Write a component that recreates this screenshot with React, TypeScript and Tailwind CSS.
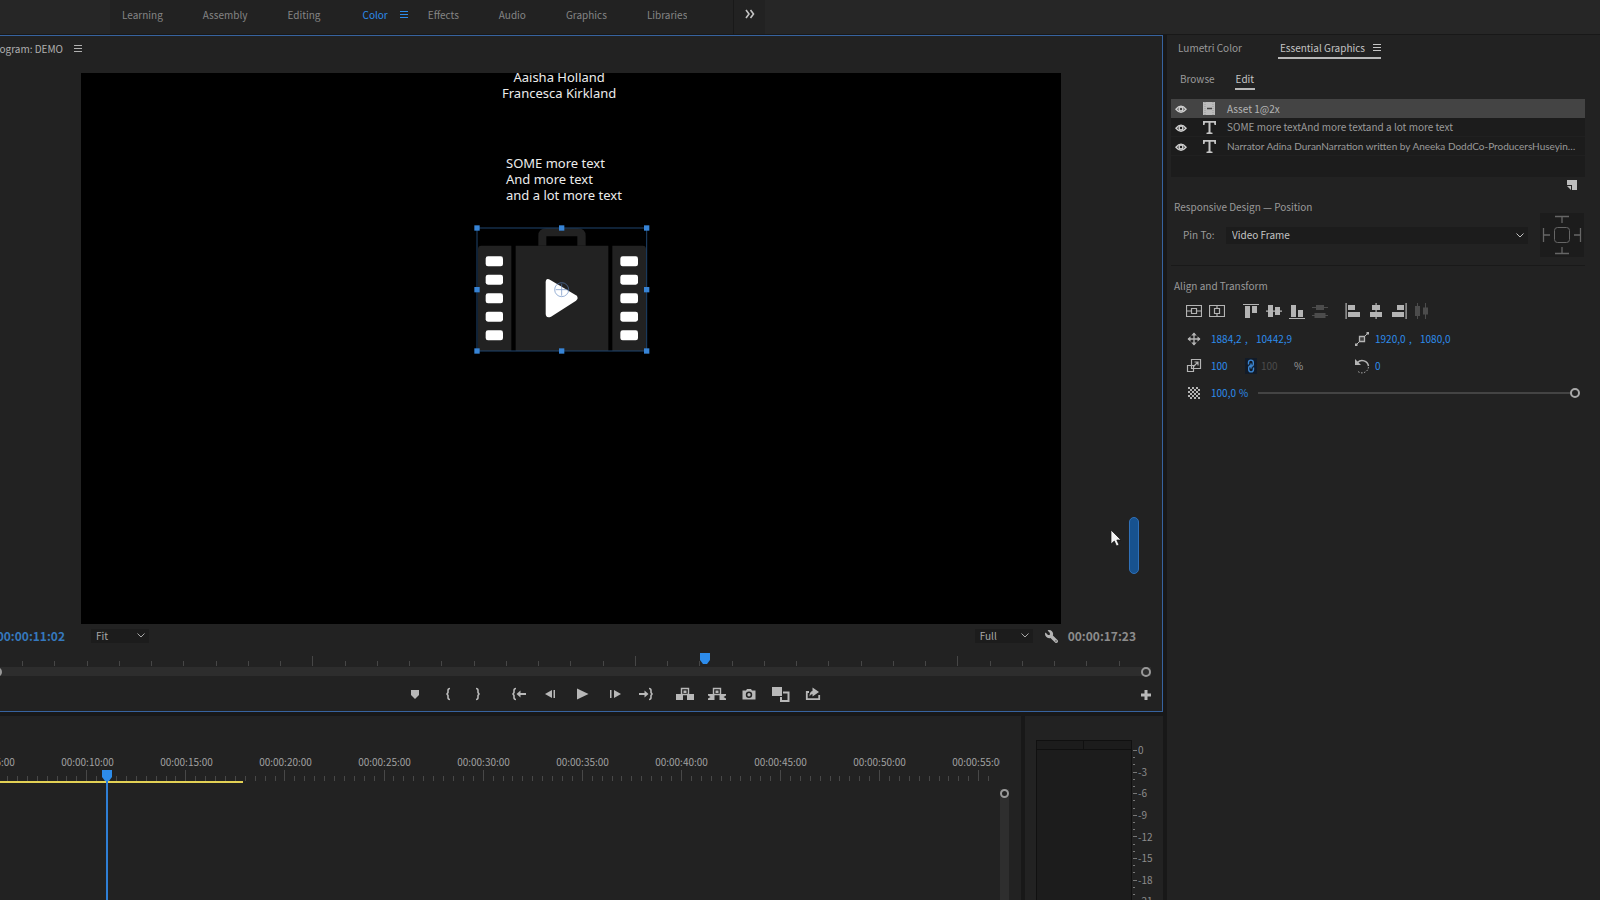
import type { ReactNode } from "react";
import { FaWrench } from "react-icons/fa6";

type Layer = {
  name: string;
  kind: "image" | "text";
  selected?: boolean;
  long?: boolean;
};

const workspacesBefore = ["Learning", "Assembly", "Editing"];
const workspacesAfter = ["Effects", "Audio", "Graphics", "Libraries"];

const layers: Layer[] = [
  { name: "Asset 1@2x", kind: "image", selected: true },
  { name: "SOME more textAnd more textand a lot more text", kind: "text" },
  { name: "Narrator Adina DuranNarration written by Aneeka DoddCo-ProducersHuseyin…", kind: "text", long: true }
];

const timeLabels = ["05", "10", "15", "20", "25", "30", "35", "40", "45", "50", "55"];
const meterLabels = ["0", "-3", "-6", "-9", "-12", "-15", "-18", "-21"];

export default function App() {
  return (
    <div className="flex h-screen flex-col overflow-hidden bg-[#181818] font-['Noto_Sans_CJK_SC','Noto_Sans',sans-serif] text-[10px] leading-4 text-[#9a9a9a]">
      <WorkspaceBar />
      <div className="flex min-h-0 flex-1 gap-1">
        <div className="flex min-w-0 flex-1 flex-col gap-1">
          <ProgramMonitor />
          <div className="flex min-h-0 flex-1 gap-1">
            <Timeline />
            <AudioMeter />
          </div>
        </div>
        <EssentialGraphics />
      </div>
    </div>
  );
}

function WorkspaceBar() {
  return (
    <header className="mb-px flex h-[34px] shrink-0 bg-[#262626]">
      <nav className="ml-[110px] flex items-center bg-[#222222] pb-1 pl-3 text-[#858585]">
        <div className="flex gap-10">
          {workspacesBefore.map((name) => (
            <a key={name} href="#">{name}</a>
          ))}
          <a href="#" className="ml-0.5 text-[#2d8ceb]">Color</a>
        </div>
        <button type="button" aria-label="Workspace menu" className="mr-5 ml-3 text-[#2d8ceb]">
          <Burger />
        </button>
        <div className="flex gap-10">
          {workspacesAfter.map((name) => (
            <a key={name} href="#">{name}</a>
          ))}
        </div>
      </nav>
      <div className="flex w-[78px] justify-end bg-[#222222]">
        <button type="button" aria-label="More workspaces" className="flex w-8 items-center justify-center border-l border-[#191919] pb-1.5 text-[#c4c4c4]">
          <svg width="10" height="10" viewBox="0 0 10 10" fill="none" stroke="currentColor" strokeWidth="1.600">
            <path d="M1 1l3 4-3 4M5.500 1l3 4-3 4" />
          </svg>
        </button>
      </div>
    </header>
  );
}

function ProgramMonitor() {
  return (
    <section className="relative flex shrink-0 flex-col border-y border-r border-[#37639f] bg-[#222222]">
      <div className="flex h-[37px] items-start gap-[11px] pt-[5px] text-[#b0b0b0]">
        <h2 className="flex w-[63px] justify-end whitespace-nowrap">Program: DEMO</h2>
        <button type="button" aria-label="Panel menu" className="flex h-4 items-center">
          <Burger />
        </button>
      </div>

      <div className="relative mr-[101px] ml-[81px] aspect-video overflow-hidden bg-black font-['Noto_Sans',sans-serif] text-[13px] leading-4 text-[#ececec]">
        <p className="absolute -top-1 left-[421px] text-center whitespace-nowrap">
          Aaisha Holland
          <br />
          Francesca Kirkland
        </p>
        <p className="absolute top-[82px] left-[425px] whitespace-nowrap">
          SOME more text
          <br />
          And more text
          <br />
          and a lot more text
        </p>
        <SuitcaseAsset />
      </div>

      <div className="flex h-6 items-center">
        <div className="flex w-[65px] justify-end text-xs font-bold text-[#3578bd]">00:00:11:02</div>
        <MiniSelect label="Zoom level" value="Fit" className="ml-[26px] w-[58px]" />
        <MiniSelect label="Playback resolution" value="Full" className="mr-3 ml-auto w-[58px]" />
        <button type="button" aria-label="Settings" className="mr-[10px] text-[#b4b4b4]">
          <FaWrench size={13} className="-scale-x-100" />
        </button>
        <div className="mr-[26px] text-xs font-bold text-[#8c8c8c]">00:00:17:23</div>
      </div>

      <div className="relative mr-3 h-[19px]">
        <svg className="h-full w-full" aria-hidden="true">
          <g stroke="#464646" strokeWidth="1">
            {Array.from({ length: 36 }, (_, i) => {
              const x = Math.round(22 + i * 32.25) + 0.5;
              return <line key={i} x1={x} x2={x} y1={i % 10 === 9 ? 8 : 13} y2="18" />;
            })}
          </g>
        </svg>
        <svg width="12" height="13" viewBox="0 0 12 13" className="absolute top-1 left-[699px]" fill="#2d8ceb">
          <path d="M1 1h10v7L8 12H4L1 8z" />
        </svg>
      </div>
      <div className="mr-[11px] flex h-[9px] items-center justify-between bg-[#2d2d2d]">
        <span className="-ml-2 size-[10px] rounded-full border-2 border-[#999999]" />
        <span className="size-[10px] rounded-full border-2 border-[#999999]" />
      </div>

      <div className="flex h-[35px] items-center pl-[399px] text-[#b8b8b8]">
        <Tool label="Add marker"><path d="M4 4h8v5l-4 4-4-4z" /></Tool>
        <Tool label="Mark in"><Brace /></Tool>
        <Tool label="Mark out"><Brace flip /></Tool>
        <span className="w-2" />
        <Tool label="Go to in">
          <path d="M5 2.500q-2 0-2 2V6.500L2 8l1 1.500v2q0 2 2 2" fill="none" stroke="currentColor" strokeWidth="1.600" />
          <path d="M5.500 8l4-3.500V7H15v2H9.500v2.500z" />
        </Tool>
        <Tool label="Step back"><path d="M2 8l7-4v8zM10.500 4H12v8h-1.500z" /></Tool>
        <Tool label="Play"><path d="M2 2.500L13.500 8 2 13.500z" /></Tool>
        <Tool label="Step forward"><path d="M14 8L7 4v8zM3 4h1.500v8H3z" /></Tool>
        <Tool label="Go to out">
          <path d="M10 2.500q2 0 2 2V6.500L13 8l-1 1.500v2q0 2-2 2" fill="none" stroke="currentColor" strokeWidth="1.600" />
          <path d="M9.500 8L5.500 4.500V7H0v2h5.500v2.500z" />
        </Tool>
        <span className="w-1.5" />
        <Tool label="Lift" wide>
          <path d="M1 8h7v6H1zM12 8h7v6h-7z" />
          <path d="M6.500 8V2.500h7V8M6 8.500h8" fill="none" stroke="currentColor" strokeWidth="1.400" />
          <path d="M8.500 4.500h3v2.500h-3z" />
        </Tool>
        <Tool label="Extract" wide>
          <path d="M1 8h6.500v6H1v-1.500L3.500 11 1 9.500zM19 8h-6.500v6H19v-1.500L16.500 11 19 9.500z" />
          <path d="M6.500 8V2.500h7V8M6 8.500h8" fill="none" stroke="currentColor" strokeWidth="1.400" />
          <path d="M8.500 4.500h3v2.500h-3z" />
        </Tool>
        <Tool label="Export frame">
          <path fillRule="evenodd" d="M1.500 4.500H5L6 3h4l1 1.500h3.500v9h-13zM8 5.500a3.200 3.200 0 100 6.400 3.200 3.200 0 000-6.400zm0 1.500a1.700 1.700 0 110 3.400A1.700 1.700 0 018 7z" />
        </Tool>
        <Tool label="Comparison view" wide>
          <path d="M1 1h10v9H1z" />
          <path d="M12 6.500h5.500v8.500H10v-4" fill="none" stroke="currentColor" strokeWidth="2" />
        </Tool>
        <Tool label="Export">
          <path d="M4 6H1.800v7.200h12.400V9" fill="none" stroke="currentColor" strokeWidth="1.800" />
          <path d="M4.500 10.500q0-5 3-5.500V1.500L14 6 7.500 10.500V8q-2 0-3 2.500z" />
        </Tool>
        <button type="button" aria-label="Button editor" className="mr-[11px] ml-auto pt-0.5">
          <svg width="10" height="10" viewBox="0 0 10 10" fill="currentColor">
            <path d="M3.500 0h3v3.500H10v3H6.500V10h-3V6.500H0v-3h3.500z" />
          </svg>
        </button>
      </div>

      <div className="absolute top-[481px] right-[23px] h-[57px] w-[10px] rounded-full border border-[#2f70b8] bg-[#17528f]" />
      <svg width="12" height="18" viewBox="0 0 12 18" className="absolute top-[493px] right-10">
        <path d="M1 1v14l3.300-3 2.200 5 2.500-1-2.200-5H11z" fill="#f4f4f4" stroke="#111111" strokeWidth=".7" />
      </svg>
    </section>
  );
}

function SuitcaseAsset() {
  const holes = [85, 140, 196, 251, 307];
  const handles = [[0, 0], [254, 0], [509, 0], [0, 185], [509, 185], [0, 369], [254, 369], [509, 369]];
  return (
    <svg width="176" height="129" viewBox="-9 -9 528 387" className="absolute top-[152px] left-[393px]">
      <g fill="#222222">
        <path d="M13 53H103V369H3V63Q3 53 13 53zM116 53H394V369H116zM406 53H497Q507 53 507 63V369H406z" />
        <path fillRule="evenodd" d="M184 53V24Q184 1 208 1H302Q326 1 326 24V53zM208 25V53H301V25z" />
      </g>
      <g fill="#ffffff">
        {holes.map((y) => (
          <g key={y}>
            <rect x="26" y={y} width="52" height="30" rx="7" />
            <rect x="430" y={y} width="53" height="30" rx="7" />
          </g>
        ))}
        <path d="M206 164Q206 148 220 156L297 202Q307 210 297 218L222 266Q206 272 206 256z" />
      </g>
      <g fill="none" stroke="#5b83bd" strokeWidth="2.500" opacity=".75">
        <circle cx="254" cy="185" r="21" />
        <path d="M254 167V203M236 185H272" />
      </g>
      <rect x="0" y="0" width="509" height="369" fill="none" stroke="#1f456f" strokeWidth="3" />
      <g fill="#3784d6">
        {handles.map(([x, y]) => (
          <rect key={`${x}-${y}`} x={x - 8} y={y - 8} width="16" height="16" />
        ))}
      </g>
    </svg>
  );
}

function Timeline() {
  return (
    <section className="flex min-w-0 flex-1 flex-col overflow-hidden bg-[#222222] pt-[38px]">
      <div className="mr-[21px] overflow-hidden">
        <div className="-ml-[61px] flex h-4 text-[#a0a0a0]">
          {timeLabels.map((label) => (
            <span key={label} className="w-[99px] shrink-0 text-center">{`00:00:${label}:00`}</span>
          ))}
        </div>
        <svg className="block h-[11px] w-full" aria-hidden="true">
          <g stroke="#484848" strokeWidth="1">
            {Array.from({ length: 100 }, (_, i) => {
              const x = Math.round(7 + i * 9.91) + 0.5;
              return <line key={i} x1={x} x2={x} y1={i % 10 === 8 ? 0 : 6} y2="11" />;
            })}
          </g>
        </svg>
      </div>
      <div className="relative flex min-h-0 flex-1">
        <div className="h-[2px] w-[243px] bg-[#e3d155]" />
        <svg width="12" height="13" viewBox="0 0 12 13" className="absolute -top-3 left-[101px]" fill="#2d8ceb">
          <path d="M1 1h10v7L8 12H4L1 8z" />
        </svg>
        <div className="absolute top-0 bottom-0 left-[106px] w-[2px] bg-[#2f7fd6]" />
        <div className="mt-2 mr-3 ml-auto flex w-[9px] justify-center bg-[#2e2e2e]">
          <span className="size-[9px] shrink-0 rounded-full border-2 border-[#999999] bg-[#222222]" />
        </div>
      </div>
    </section>
  );
}

function AudioMeter() {
  return (
    <section className="flex w-[138px] shrink-0 overflow-hidden bg-[#222222] pl-[11px] text-[#8c8c8c]">
      <div className="mt-6 w-24 border border-b-0 border-[#101010] bg-[#1c1c1c]">
        <div className="grid h-[9px] grid-cols-2 border-b border-[#101010]">
          <span className="border-r border-[#101010]" />
        </div>
      </div>
      <svg width="6" height="170" className="mt-[34px] shrink-0" stroke="#777777" aria-hidden="true">
        {Array.from({ length: 24 }, (_, i) => {
          const y = Math.round(i * 7.2) + 0.5;
          return <line key={i} x1="1" x2={i % 3 === 0 ? 5 : 3} y1={y} y2={y} />;
        })}
      </svg>
      <ul className="mt-[26px] flex h-[167px] flex-col justify-between">
        {meterLabels.map((label) => (
          <li key={label} className="h-4">{label}</li>
        ))}
      </ul>
    </section>
  );
}

function EssentialGraphics() {
  return (
    <aside className="w-[433px] shrink-0 bg-[#222222] pt-1 pr-[15px] pl-1">
      <div className="flex gap-9 pl-[7px]">
        <button type="button" className="h-5 border-b-2 border-transparent">Lumetri Color</button>
        <button type="button" className="flex h-5 items-center gap-2 border-b-2 border-[#b8b8b8] pl-0.5 text-[#c4c4c4]">
          Essential Graphics
          <Burger />
        </button>
      </div>
      <div className="mt-[11px] flex gap-5 pl-[9px]">
        <button type="button" className="h-5 border-b-2 border-transparent">Browse</button>
        <button type="button" className="h-5 border-b-2 border-[#b8b8b8] px-px text-[#c4c4c4]">Edit</button>
      </div>

      <ul className="mt-[9px] h-[78px] bg-[#1c1c1c]">
        {layers.map((layer) => (
          <LayerRow key={layer.name} layer={layer} />
        ))}
      </ul>
      <div className="flex justify-end pt-[3px] pr-2">
        <button type="button" aria-label="New layer" className="text-[#bdbdbd]">
          <svg width="10" height="10" viewBox="0 0 10 10" fill="currentColor">
            <path d="M0 0h10v10H5V5H0z" />
            <path d="M0 6h4v4z" />
          </svg>
        </button>
      </div>

      <h3 className="mt-[9px] pl-[3px]">Responsive Design — Position</h3>
      <div className="-mt-0.5 flex items-center border-b border-[#191919] pb-2">
        <label htmlFor="pin-to" className="w-[55px] pl-3">Pin To:</label>
        <div className="relative flex-1 text-[#c4c4c4]">
          <select id="pin-to" className="h-[17px] w-full appearance-none bg-[#1c1c1c] pl-1.5 leading-4">
            <option>Video Frame</option>
          </select>
          <Chevron className="absolute top-1.5 right-1" />
        </div>
        <button type="button" aria-label="Pin edges" className="mr-px ml-3 bg-[#1c1c1c] text-[#666666]">
          <svg width="44" height="44" viewBox="0 0 44 44" fill="none" stroke="currentColor">
            <path d="M15 3.500h14M22 3.500V10M15 40.500h14M22 40.500V34M3.500 15v14M3.500 22H10M40.500 15v14M40.500 22H34" strokeWidth="1.300" />
            <rect x="14.500" y="14.500" width="15" height="15" rx="3" />
          </svg>
        </button>
      </div>

      <h3 className="mt-3 pl-[3px]">Align and Transform</h3>
      <AlignTools />
      <TransformFields />
    </aside>
  );
}

function LayerRow({ layer }: { layer: Layer }) {
  return (
    <li className={`flex h-[19px] items-center ${layer.selected ? "bg-[#444444] text-[#b4b4b4]" : "border-b border-[#202020]"}`}>
      <button type="button" aria-label="Toggle visibility" className="ml-1 pt-px text-[#d0d0d0]">
        <svg width="12" height="10" viewBox="0 0 12 10" fill="none" stroke="currentColor">
          <path d="M1 5.300Q6-1 11 5.300 6 11.300 1 5.300z" strokeWidth="1.400" />
          <circle cx="6" cy="5" r="1.900" strokeWidth="1.400" />
        </svg>
      </button>
      <span className="ml-[14px] flex w-4 justify-center text-[#c4c4c4]">
        {layer.kind === "image" ? (
          <svg width="12" height="13" viewBox="0 0 12 13">
            <path d="M0 0h12v13H0z" fill="#bcbcbc" />
            <path d="M2 0v13M10 0v13" stroke="#999999" strokeDasharray="1 1" />
            <path d="M4 6.500h5" stroke="#444444" strokeWidth="1.500" />
          </svg>
        ) : (
          <svg width="13" height="13" viewBox="0 0 13 13" fill="currentColor">
            <path d="M0 0h13v4h-1.500L11 1.800H7.500v9.500l2 .5V13h-6v-1.200l2-.5V1.800H2L1.500 4H0z" />
          </svg>
        )}
      </span>
      <span className={`ml-[10px] whitespace-nowrap ${layer.long ? "font-['Lato',sans-serif]" : ""}`}>{layer.name}</span>
    </li>
  );
}

function AlignTools() {
  return (
    <div className="mt-[7px] flex h-5 items-center pl-[15px] text-[#b4b4b4]">
      <AlignButton label="Center vertically">
        <path d="M.5 2.500h15v11H.5zM.5 8H5M11 8h4.500M5.500 5.500h5v5h-5z" fill="none" stroke="currentColor" strokeWidth="1.200" />
      </AlignButton>
      <AlignButton label="Center horizontally">
        <path d="M.5 2.500h15v11H.5zM8 2.500V5M8 11v2.500M5.500 5.500h5v5h-5z" fill="none" stroke="currentColor" strokeWidth="1.200" />
      </AlignButton>
      <span className="w-[11px]" />
      <AlignButton label="Align top"><path d="M0 1h16v1H0zM2 3h5v12H2zM9 3h5v7H9z" /></AlignButton>
      <AlignButton label="Align vertical centers"><path d="M0 7.500h16v1.200H0zM2 2h5v12H2zM9 4h5v8H9z" /></AlignButton>
      <AlignButton label="Align bottom"><path d="M0 15h16v1H0zM2 2h5v12H2zM9 7h5v7H9z" /></AlignButton>
      <AlignButton label="Distribute vertically" disabled><path d="M0 4h16v1H0zM0 12h16v1H0zM4 2h8v5H4zM2.500 10h11v5h-11z" /></AlignButton>
      <span className="w-[10px]" />
      <AlignButton label="Align left"><path d="M.5 0h1.200v16H.5zM3 2h7v5H3zM3 9h12v5H3z" /></AlignButton>
      <AlignButton label="Align horizontal centers"><path d="M7.500 0h1.200v16H7.500zM4 2h8v5H4zM2 9h12v5H2z" /></AlignButton>
      <AlignButton label="Align right"><path d="M14.500 0h1.200v16h-1.200zM6 2h7v5H6zM1 9h12v5H1z" /></AlignButton>
      <AlignButton label="Distribute horizontally" disabled><path d="M3 0h1v16H3zM11 0h1v16h-1zM1 3h5v10H1zM9 4.500h5v7H9z" /></AlignButton>
    </div>
  );
}

function TransformFields() {
  return (
    <div className="mt-2 flex flex-col gap-[7px] pl-[15px] text-[#b4b4b4]">
      <div className="grid h-5 grid-cols-[168px_1fr] items-center">
        <div className="flex items-center">
          <FieldIcon>
            <path d="M8 2v12M2 8h12" stroke="currentColor" strokeWidth="1.300" />
            <path d="M8 1.500l2.800 3H5.200zM8 14.500l2.800-3H5.200zM1.500 8l3-2.800v5.600zM14.500 8l-3-2.800v5.600z" />
          </FieldIcon>
          <Value label="Position X" value="1884,2" className="ml-[9px] w-[34px]" />
          <span className="w-[11px] text-[#2d8ceb]">,</span>
          <Value label="Position Y" value="10442,9" className="w-12" />
        </div>
        <div className="flex items-center">
          <FieldIcon>
            <path d="M2 14L14 2" stroke="currentColor" />
            <path d="M1 12.500h2.500V15H1zM12.500 1H15v2.500h-2.500z" />
            <path d="M5.500 5.500h5v5h-5z" fill="#444444" stroke="currentColor" strokeWidth="1.300" />
          </FieldIcon>
          <Value label="Anchor X" value="1920,0" className="ml-[5px] w-[34px]" />
          <span className="w-[11px] text-[#2d8ceb]">,</span>
          <Value label="Anchor Y" value="1080,0" className="w-12" />
        </div>
      </div>
      <div className="grid h-5 grid-cols-[168px_1fr] items-center">
        <div className="flex items-center">
          <FieldIcon>
            <path d="M5.500 1.500h9v9h-9zM1.500 7.500h6v6h-6z" fill="none" stroke="currentColor" strokeWidth="1.200" />
            <path d="M7.500 8.500l4.500-4.500M8.500 4H12v3.500" fill="none" stroke="currentColor" strokeWidth="1.200" />
          </FieldIcon>
          <Value label="Scale" value="100" className="ml-[9px] w-[34px]" />
          <button type="button" aria-label="Link scale" className="flex h-4 w-3 items-center justify-center bg-[#121b28] text-[#3b86d2]">
            <svg width="8" height="14" viewBox="0 0 8 14" fill="none" stroke="currentColor" strokeWidth="1.400">
              <path d="M1.500 3.500a2.300 2.300 0 014.800 0V5a2.300 2.300 0 01-2.300 2.300M6.500 10.500a2.300 2.300 0 01-4.800 0V9A2.300 2.300 0 014 6.700M1.500 3.500V5.500M6.500 8.500v2M4 4.500v5" />
            </svg>
          </button>
          <span className="ml-1 w-[33px] text-[#4c4c4c]">100</span>
          <span className="text-[#9a9a9a]">%</span>
        </div>
        <div className="flex items-center">
          <FieldIcon>
            <path d="M3.500 4.500A6.500 6.500 0 0114.500 8" fill="none" stroke="currentColor" strokeWidth="1.500" />
            <path d="M14.500 9A6.500 6.500 0 013 12.500" fill="none" stroke="currentColor" strokeDasharray="1.500 1.500" />
            <path d="M1 1v6h6z" />
          </FieldIcon>
          <Value label="Rotation" value="0" className="ml-[5px] w-[34px]" />
        </div>
      </div>
      <div className="flex h-5 items-center">
        <FieldIcon>
          {Array.from({ length: 18 }, (_, i) => {
            const row = Math.floor(i / 3);
            return <rect key={i} x={2 + (i % 3) * 4 + (row % 2) * 2} y={2 + row * 2} width="2" height="2" />;
          })}
        </FieldIcon>
        <Value label="Opacity" value="100,0" className="ml-[9px] w-7" />
        <span className="text-[#2d8ceb]">%</span>
        <input
          type="range"
          aria-label="Opacity slider"
          defaultValue={100}
          className="mr-[5px] ml-[10px] h-3 min-w-0 flex-1 appearance-none bg-transparent [&::-webkit-slider-runnable-track]:h-[2px] [&::-webkit-slider-runnable-track]:bg-[#444444] [&::-webkit-slider-thumb]:-mt-1 [&::-webkit-slider-thumb]:size-[10px] [&::-webkit-slider-thumb]:appearance-none [&::-webkit-slider-thumb]:rounded-full [&::-webkit-slider-thumb]:border-2 [&::-webkit-slider-thumb]:border-[#a8a8a8] [&::-webkit-slider-thumb]:bg-[#222222]"
        />
      </div>
    </div>
  );
}

function Burger() {
  return (
    <svg width="8" height="8" viewBox="0 0 8 8" fill="currentColor">
      <path d="M0 0h8v1H0zM0 3h8v1H0zM0 6h8v1H0z" />
    </svg>
  );
}

function Chevron({ className }: { className?: string }) {
  return (
    <svg width="8" height="5" viewBox="0 0 8 5" fill="none" stroke="currentColor" className={`pointer-events-none ${className}`}>
      <path d="M.5.500L4 4 7.500.500" />
    </svg>
  );
}

function Brace({ flip }: { flip?: boolean }) {
  return (
    <path
      d={flip ? "M5 2.500q2 0 2 2V6.500L8 8 7 9.500v2q0 2-2 2" : "M11 2.500q-2 0-2 2V6.500L8 8l1 1.500v2q0 2 2 2"}
      fill="none"
      stroke="currentColor"
      strokeWidth="1.600"
    />
  );
}

function Tool({ label, wide, children }: { label: string; wide?: boolean; children: ReactNode }) {
  return (
    <button type="button" aria-label={label} className="flex w-8 shrink-0 items-center justify-center">
      <svg width={wide ? 20 : 16} height="16" viewBox={wide ? "0 0 20 16" : "0 0 16 16"} fill="currentColor">
        {children}
      </svg>
    </button>
  );
}

function AlignButton({ label, disabled, children }: { label: string; disabled?: boolean; children: ReactNode }) {
  return (
    <button type="button" aria-label={label} disabled={disabled} className="w-[23px] disabled:text-[#4c4c4c]">
      <svg width="16" height="16" viewBox="0 0 16 16" fill="currentColor">
        {children}
      </svg>
    </button>
  );
}

function FieldIcon({ children }: { children: ReactNode }) {
  return (
    <svg width="16" height="16" viewBox="0 0 16 16" fill="currentColor" className="shrink-0">
      {children}
    </svg>
  );
}

function MiniSelect({ label, value, className }: { label: string; value: string; className: string }) {
  return (
    <div className={`relative text-[#a8a8a8] ${className}`}>
      <select aria-label={label} className="h-3.5 w-full appearance-none bg-[#1c1c1c] pl-[5px] leading-3.5">
        <option>{value}</option>
      </select>
      <Chevron className="absolute top-[5px] right-1" />
    </div>
  );
}

function Value({ label, value, className }: { label: string; value: string; className: string }) {
  return <input aria-label={label} defaultValue={value} className={`bg-transparent text-[#2d8ceb] outline-none ${className}`} />;
}
